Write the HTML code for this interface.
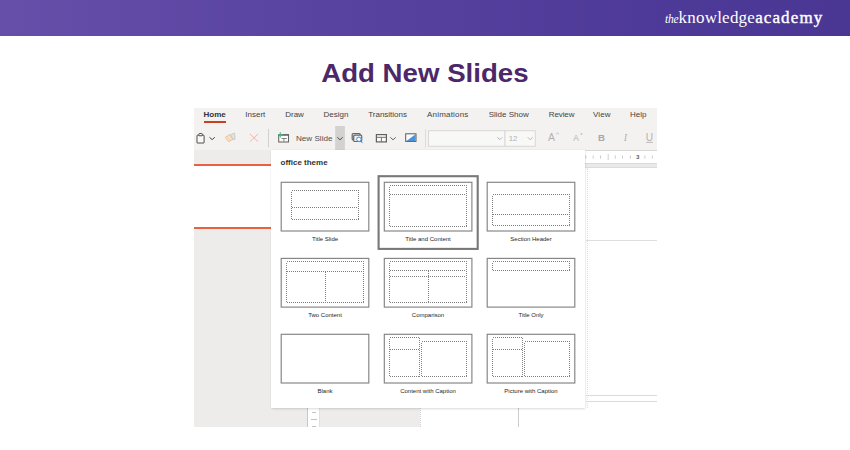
<!DOCTYPE html>
<html><head><meta charset="utf-8"><title>Add New Slides</title>
<style>
*{margin:0;padding:0;box-sizing:border-box}
html,body{width:850px;height:450px;overflow:hidden;background:#fff}
body{position:relative;font-family:"Liberation Sans",sans-serif}
.abs{position:absolute}
#banner{left:0;top:0;width:850px;height:36px;background:linear-gradient(90deg,#664fa9 0%,#5a44a2 35%,#4e3a98 75%,#4a3693 100%)}
#logo{left:665px;top:6px;height:24px;white-space:nowrap;color:#fff;font-family:"Liberation Serif",serif;font-size:17px;line-height:24px;letter-spacing:.23px}
#logo i{font-size:11.5px;letter-spacing:-.2px}
#logo b{font-weight:normal;-webkit-text-stroke:.4px #fff;letter-spacing:1.12px}
#title{left:0;top:54.7px;width:850px;text-align:center;font-weight:bold;font-size:25.3px;line-height:36px;color:#4c2869;white-space:nowrap}
#title span{display:inline-block;transform:scaleX(1.093);transform-origin:50% 50%}
#shot{left:194px;top:108px;width:463px;height:319px;background:#fff;overflow:hidden;font-family:"Liberation Sans",sans-serif}
#shot .abs{position:absolute}
.tab{position:absolute;top:1.6px;font-size:8px;line-height:10px;color:#444;white-space:nowrap}
.lab{position:absolute;font-size:6px;line-height:8px;color:#262626;white-space:nowrap;text-align:center;width:100px}
.th{position:absolute;width:88px;height:49px;border:1px solid #7a7a7a;background:#fff;box-shadow:0 0 0 .5px #bdbdbd}
.d{position:absolute;border:1px dotted #6b6b6b}
.hl{position:absolute;height:0;border-top:1px dotted #555}
.vl{position:absolute;width:0;border-left:1px dotted #555}
.g{color:#b3b1af}
</style></head><body>
<div id="banner" class="abs"></div>
<div id="logo" class="abs"><i>the</i>knowledge<b>academy</b></div>
<div id="title" class="abs"><span>Add New Slides</span></div>

<div id="shot" class="abs">
  <!-- ribbon -->
  <div class="abs" style="left:0;top:0;width:463px;height:42px;background:#f3f2f1"></div>
  <div class="tab" style="left:9.5px;font-weight:bold;color:#333">Home</div>
  <div class="abs" style="left:9.5px;top:13.3px;width:22.5px;height:1.8px;background:#c8401f"></div>
  <div class="tab" style="left:51.3px">Insert</div>
  <div class="tab" style="left:91.2px">Draw</div>
  <div class="tab" style="left:129.5px">Design</div>
  <div class="tab" style="left:174.2px">Transitions</div>
  <div class="tab" style="left:233px;letter-spacing:.2px">Animations</div>
  <div class="tab" style="left:294.7px">Slide Show</div>
  <div class="tab" style="left:354.8px;letter-spacing:-.12px">Review</div>
  <div class="tab" style="left:399px;letter-spacing:.15px">View</div>
  <div class="tab" style="left:436px">Help</div>

  <!-- toolbar icons -->
  <svg class="abs" style="left:0;top:18px" width="463" height="24" viewBox="0 0 463 24" fill="none">
    <!-- paste -->
    <rect x="3" y="9.2" width="7.1" height="7.8" rx=".35" stroke="#3c3c3c" stroke-width=".9" fill="#f9f8f7"/>
    <rect x="4.9" y="7.5" width="3.4" height="2.3" rx=".6" fill="#f3f2f1" stroke="#3c3c3c" stroke-width=".85"/>
    <path d="M15.5 11.3l2.65 2.3 2.65-2.3" stroke="#444" stroke-width="1"/>
    <!-- format painter -->
    <path d="M31.3 11.4l4.4-2.9 3.2 4.9-4.3 2.3z" stroke="#efba86" stroke-width=".9" fill="#f9e6d2"/>
    <path d="M33.2 10.3l3.6 4.6" stroke="#efba86" stroke-width=".7"/>
    <path d="M36.4 8.7l4.2-1.6.5 6.2-2.2.2z" stroke="#c6c4c2" stroke-width=".8" fill="#e3e1df"/>
    <!-- delete -->
    <path d="M55.9 7.9l8.2 7.8M64.1 7.9l-8.2 7.8" stroke="#f2b6a8" stroke-width="1"/>
    <!-- separator -->
    <path d="M74.5 3v18.5" stroke="#d2d0ce" stroke-width="1"/>
    <!-- new slide -->
    <rect x="84.7" y="8.9" width="9.8" height="7.1" stroke="#666" stroke-width="1.05" fill="#fbfbfb"/>
    <path d="M84.2 8.9h10.8" stroke="#5e5e5e" stroke-width="1.3"/>
    <path d="M87.6 12.5h5.2M89.9 12.5v3" stroke="#777" stroke-width=".9"/>
    <path d="M86.3 6.2v5.2M84 8.8h4.8" stroke="#55b383" stroke-width="1.1"/>
    <!-- dropdown pressed -->
    <rect x="141.2" y="0" width="9.7" height="24" fill="#d4d2d0"/>
    <path d="M143.4 11.3l2.65 2.5 2.65-2.5" stroke="#4a4a4a" stroke-width="1"/>
    <!-- reuse slides -->
    <rect x="158.2" y="7.5" width="8" height="6.4" rx=".9" stroke="#686868" stroke-width="1.2" fill="#e0dfde"/>
    <rect x="159.7" y="9.1" width="8" height="6.4" rx=".9" stroke="#686868" stroke-width="1.2" fill="#eeedec"/>
    <circle cx="164.9" cy="13.3" r="2.2" stroke="#3f93e0" stroke-width="1" fill="#fff"/>
    <path d="M166.6 15.1l2 2.1" stroke="#3f93e0" stroke-width="1"/>
    <!-- layout -->
    <rect x="182.4" y="8.6" width="10" height="7.3" stroke="#606060" stroke-width="1.2" fill="#fbfbfb"/>
    <path d="M182.4 11.3h10M187.4 11.3v4.6" stroke="#707070" stroke-width="1"/>
    <path d="M196.3 11.3l2.75 2.5 2.75-2.5" stroke="#666" stroke-width="1"/>
    <!-- design -->
    <rect x="211.7" y="7.8" width="10.3" height="7.6" stroke="#5a5a5a" stroke-width="1" fill="#fbfbfb"/>
    <path d="M221.5 8.3v6.6h-9z" fill="#4b92d8"/>
    <!-- separator -->
    <path d="M231.5 3v18.5" stroke="#dddbd9" stroke-width="1"/>
    <!-- font box -->
    <rect x="234.5" y="4.7" width="76.5" height="15.6" fill="#f8f8f7" stroke="#dad8d6" stroke-width="1"/>
    <rect x="311" y="4.7" width="30.3" height="15.6" fill="#f8f8f7" stroke="#dad8d6" stroke-width="1"/>
    <path d="M303.4 11.3l2.4 2.4 2.4-2.4" stroke="#adabaa" stroke-width=".9"/>
    <path d="M333.8 11.3l2.4 2.4 2.4-2.4" stroke="#adabaa" stroke-width=".9"/>
    <!-- carets -->
    <path d="M362.2 8.2l1.3-1.3 1.3 1.3" stroke="#8ab9e6" stroke-width=".8"/>
    <path d="M386 7.4h2.8l-1.4 1.5z" fill="#8ab9e6"/>
    <path d="M452.3 16.4h6.6" stroke="#b3b1af" stroke-width=".9"/>
  </svg>
  <div class="abs" style="left:102px;top:26px;font-size:8.1px;line-height:10px;color:#4f4f4f;white-space:nowrap">New Slide</div>
  <div class="abs g" style="left:314.7px;top:25.9px;font-size:7.8px;line-height:10px">12</div>
  <div class="abs g" style="left:354px;top:23.5px;font-size:10.4px;line-height:12px">A</div>
  <div class="abs g" style="left:379.3px;top:25px;font-size:8.4px;line-height:10px">A</div>
  <div class="abs" style="left:403.9px;top:23.6px;font-size:9.7px;line-height:12px;font-weight:bold;color:#a9a7a5">B</div>
  <div class="abs g" style="left:429.8px;top:23.5px;font-size:10.2px;line-height:12px;font-style:italic;font-family:'Liberation Serif',serif">I</div>
  <div class="abs g" style="left:451.8px;top:23.5px;font-size:10.2px;line-height:12px">U</div>

  <!-- left thumbnail pane -->
  <div class="abs" style="left:0;top:42px;width:77px;height:277px;background:#eeecea"></div>
  <div class="abs" style="left:0;top:56px;width:77px;height:65px;background:#fff;border-top:2px solid #ea6140;border-bottom:2.4px solid #ea6140"></div>

  <!-- right editing area -->
  <div class="abs" style="left:391px;top:42px;width:72px;height:277px;background:#fff"></div>
  <div class="abs" style="left:391px;top:42px;width:72px;height:1px;background:#d8d6d6"></div>
  <div class="abs" style="left:391px;top:55px;width:72px;height:5px;background:#ebe9e7;border-top:1px solid #dcdad8;border-bottom:1px solid #dedcda"></div>
  <svg class="abs" style="left:391px;top:43px" width="72" height="12" viewBox="0 0 72 12">
    <path d="M.8 4.4v3.3M8.2 4.4v3.3M15.5 4.4v3.3M23.2 3v6M30.3 4.4v3.3M37.5 4.4v3.3M45.4 4.4v3.3M59.9 4.4v3.3M67.3 4.4v3.3" stroke="#cbc9c7" stroke-width=".9"/>
    <text x="52.7" y="8.2" text-anchor="middle" font-family="Liberation Sans, sans-serif" font-size="5.6" font-weight="bold" fill="#555">3</text>
  </svg>
  <div class="abs" style="left:392.5px;top:60px;width:0;height:240px;border-left:1px dotted #e3e1df"></div>
  <div class="abs" style="left:392px;top:131.5px;width:71px;height:1px;background:#e0dedc"></div>
  <div class="abs" style="left:392px;top:287px;width:71px;height:1px;background:#dddbd9"></div>
  <div class="abs" style="left:392px;top:292.5px;width:71px;height:1px;background:#dddbd9"></div>

  <!-- below panel -->
  <div class="abs" style="left:77px;top:295px;width:149px;height:24px;background:#eeecea"></div>
  <div class="abs" style="left:113.3px;top:295px;width:12.9px;height:24px;background:#fff;border-left:1px solid #c9c7c5;border-right:1px solid #e2e0de"></div>
  <div class="abs" style="left:118.4px;top:304px;width:4px;height:1px;background:#c2c2c2"></div>
  <div class="abs" style="left:117.4px;top:311.2px;width:6px;height:1px;background:#c2c2c2"></div>
  <div class="abs" style="left:118.4px;top:318px;width:4px;height:1px;background:#c2c2c2"></div>
  <div class="abs" style="left:226px;top:295px;width:165px;height:24px;background:#fff;border-left:1px dotted #d5d3d1"></div>
  <div class="abs" style="left:324px;top:295px;width:1px;height:24px;background:#cfcdcb"></div>

  <!-- dropdown panel -->
  <div class="abs" id="panel" style="left:77px;top:42px;width:314px;height:258px;background:#fff;box-shadow:0 1.5px 2.5px -.5px rgba(0,0,0,.13),0 0 1.5px rgba(0,0,0,.10)"></div>
  <div class="abs" style="left:86.5px;top:50.2px;font-size:8px;line-height:10px;font-weight:bold;color:#333;white-space:nowrap">office theme</div>

  <svg class="abs" style="left:0;top:0" width="463" height="319" viewBox="0 0 463 319" fill="none">
    <style>.dt{fill:none;stroke:#808080;stroke-width:1;stroke-dasharray:1 1;shape-rendering:crispEdges}</style>
    <rect x="184.6" y="68.2" width="99.1" height="72.7" stroke="#787878" stroke-width="2.1"/>
    <rect x="87.2" y="74.3" width="87.6" height="48.7" fill="#fff" stroke="#838383" stroke-width="1.15"/>
    <rect x="190.3" y="74.3" width="87.6" height="48.7" fill="#fff" stroke="#838383" stroke-width="1.15"/>
    <rect x="293.2" y="74.3" width="87.6" height="48.7" fill="#fff" stroke="#838383" stroke-width="1.15"/>
    <rect x="87.2" y="150.4" width="87.6" height="48.7" fill="#fff" stroke="#838383" stroke-width="1.15"/>
    <rect x="190.3" y="150.4" width="87.6" height="48.7" fill="#fff" stroke="#838383" stroke-width="1.15"/>
    <rect x="293.2" y="150.4" width="87.6" height="48.7" fill="#fff" stroke="#838383" stroke-width="1.15"/>
    <rect x="87.2" y="226.3" width="87.6" height="48.7" fill="#fff" stroke="#838383" stroke-width="1.15"/>
    <rect x="190.3" y="226.3" width="87.6" height="48.7" fill="#fff" stroke="#838383" stroke-width="1.15"/>
    <rect x="293.2" y="226.3" width="87.6" height="48.7" fill="#fff" stroke="#838383" stroke-width="1.15"/>
    <rect x="97.5" y="82.5" width="67.0" height="29.0" class="dt"/>
    <path d="M98 99.5H164" class="dt"/>
    <rect x="195.5" y="77.5" width="77.0" height="41.0" class="dt"/>
    <path d="M196 86.5H272" class="dt"/>
    <rect x="298.5" y="86.5" width="77.0" height="31.0" class="dt"/>
    <path d="M299 106.5H375" class="dt"/>
    <rect x="92.5" y="153.5" width="77.0" height="41.0" class="dt"/>
    <path d="M93 163.5H169" class="dt"/>
    <path d="M131.5 164V194" class="dt"/>
    <rect x="195.5" y="153.5" width="77.0" height="41.0" class="dt"/>
    <path d="M196 162.5H272" class="dt"/>
    <path d="M196 168.5H272" class="dt"/>
    <path d="M234.5 163V194" class="dt"/>
    <rect x="298.5" y="153.5" width="77.0" height="9.0" class="dt"/>
    <rect x="195.5" y="229.5" width="30.0" height="39.0" class="dt"/>
    <path d="M196 241.5H225" class="dt"/>
    <rect x="227.5" y="233.5" width="45.0" height="35.0" class="dt"/>
    <rect x="298.5" y="229.5" width="30.0" height="39.0" class="dt"/>
    <path d="M299 241.5H328" class="dt"/>
    <rect x="330.5" y="233.5" width="45.0" height="35.0" class="dt"/>
  </svg>

  <div class="lab" style="left:81px;top:127.4px">Title Slide</div>
  <div class="lab" style="left:184px;top:127.4px">Title and Content</div>
  <div class="lab" style="left:287px;top:127.4px">Section Header</div>
  <div class="lab" style="left:81px;top:203.2px">Two Content</div>
  <div class="lab" style="left:184px;top:203.2px">Comparison</div>
  <div class="lab" style="left:287px;top:203.2px">Title Only</div>
  <div class="lab" style="left:81px;top:279.3px">Blank</div>
  <div class="lab" style="left:184px;top:279.3px">Content with Caption</div>
  <div class="lab" style="left:287px;top:279.3px">Picture with Caption</div>
</div>
</body></html>
